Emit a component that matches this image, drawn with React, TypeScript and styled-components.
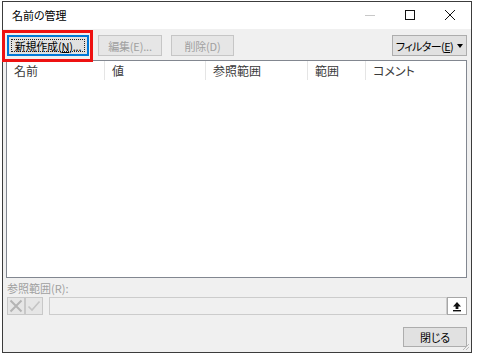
import React from "react";
import styled, { createGlobalStyle, css } from "styled-components";

const GlobalStyle = createGlobalStyle`
  html, body {
    margin: 0;
    padding: 0;
    background: #ffffff;
  }
  body {
    font-family: "Noto Sans CJK JP", "Liberation Sans", sans-serif;
    font-size: 12px;
    font-feature-settings: "palt";
    color: #000000;
  }
`;

const columns = [
  { title: "名前", width: 98 },
  { title: "値", width: 101 },
  { title: "参照範囲", width: 102 },
  { title: "範囲", width: 58 },
  { title: "コメント", width: 100 }
];

const App: React.FC = () => {
  return (
    <>
      <GlobalStyle />
      <Page>
        <Window>
          <TitleBar>
            <Title>名前の管理</Title>
            <CaptionButtons>
              <CaptionButton>
                <svg width="10" height="10" viewBox="0 0 10 10">
                  <line x1="0" y1="5.5" x2="10" y2="5.5" stroke="#c8c8c8" strokeWidth="1" />
                </svg>
              </CaptionButton>
              <CaptionButton>
                <svg width="10" height="10" viewBox="0 0 10 10">
                  <rect x="0.5" y="0.5" width="9" height="9" fill="none" stroke="#111" strokeWidth="1" />
                </svg>
              </CaptionButton>
              <CaptionButton>
                <svg width="10" height="10" viewBox="0 0 10 10">
                  <path d="M0 0 L10 10 M10 0 L0 10" stroke="#111" strokeWidth="1" />
                </svg>
              </CaptionButton>
            </CaptionButtons>
          </TitleBar>

          <Body>
            <Toolbar>
              <Button isDefault width={82}>
                <FocusRect>
                  新規作成(<u>N</u>)...
                </FocusRect>
              </Button>
              <Button disabled width={64}>
                編集(E)...
              </Button>
              <Button disabled width={63}>
                削除(D)
              </Button>
              <Spacer />
              <Button width={75}>
                <Narrow>フィルター(<u>E</u>)</Narrow>
                <Caret />
              </Button>
            </Toolbar>

            <ListView>
              <HeaderRow>
                {columns.map((col) => (
                  <HeaderCell key={col.title} style={{ width: col.width }}>
                    {col.title}
                  </HeaderCell>
                ))}
              </HeaderRow>
            </ListView>

            <RefLabel>参照範囲(R):</RefLabel>
            <RefRow>
              <IconButton>
                <svg width="14" height="14" viewBox="0 0 14 14">
                  <path d="M1.5 1.5 L12.5 12.5 M12.5 1.5 L1.5 12.5" stroke="#b4b4b4" strokeWidth="2" />
                </svg>
              </IconButton>
              <IconButton>
                <svg width="14" height="14" viewBox="0 0 14 14">
                  <path d="M1.5 7.5 L5 11 L12.5 2.5" fill="none" stroke="#c4c4c4" strokeWidth="1.6" />
                </svg>
              </IconButton>
              <RefInput />
              <CollapseButton>
                <svg width="10" height="11" viewBox="0 0 10 11">
                  <path d="M5 1 L9 5.5 L6.4 5.5 L6.4 8 L3.6 8 L3.6 5.5 L1 5.5 Z" fill="#111" />
                  <rect x="1" y="9" width="8" height="1.4" fill="#111" />
                </svg>
              </CollapseButton>
            </RefRow>

            <Footer>
              <Button width={64} tall={20}>閉じる</Button>
            </Footer>
          </Body>
          <Grip>
            <svg width="10" height="10" viewBox="0 0 10 10">
              <path d="M9 3 L3 9 M9 6 L6 9" stroke="#b8b8b8" strokeWidth="1" />
            </svg>
          </Grip>
        </Window>
        <Highlight />
      </Page>
    </>
  );
};

export default App;

const Page = styled.div`
  position: relative;
  width: 477px;
  height: 358px;
  padding: 1px 0 0 2px;
  box-sizing: border-box;
`;

const Window = styled.div`
  position: relative;
  width: 470px;
  height: 352px;
  box-sizing: border-box;
  border: 1px solid #3c3c3c;
  background: #f0f0f0;
  display: flex;
  flex-direction: column;
`;

const TitleBar = styled.div`
  height: 27px;
  flex-shrink: 0;
  background: #ffffff;
  display: flex;
  align-items: center;
  padding-left: 9px;
`;

const Title = styled.div`
  flex: 1;
  font-size: 11px;
  color: #000000;
  padding-bottom: 2px;
`;

const CaptionButtons = styled.div`
  display: flex;
  height: 100%;
  margin-right: 1px;
`;

const CaptionButton = styled.div`
  width: 40px;
  height: 100%;
  display: flex;
  align-items: center;
  justify-content: center;
  padding-bottom: 2px;
  box-sizing: border-box;
`;

const Body = styled.div`
  flex: 1;
  display: flex;
  flex-direction: column;
  padding: 6px 4px 0 3px;
`;

const Toolbar = styled.div`
  display: flex;
  align-items: center;
  gap: 9px;
  padding-left: 1px;
  height: 21px;
`;

const Spacer = styled.div`
  flex: 1;
`;

const Button = styled.button<{ isDefault?: boolean; width: number; tall?: number }>`
  width: ${({ width }) => width}px;
  height: ${({ tall }) => tall ?? 21}px;
  padding: 0;
  box-sizing: border-box;
  display: flex;
  align-items: center;
  justify-content: center;
  font-family: "Noto Sans CJK JP", "Liberation Sans", sans-serif;
  font-feature-settings: "palt";
  font-size: 11px;
  line-height: 14px;
  letter-spacing: -0.2px;
  color: #000000;
  background: #e1e1e1;
  border: 1px solid #adadad;
  white-space: nowrap;
  overflow: hidden;

  u {
    text-decoration: underline;
    text-underline-offset: 1px;
  }

  ${({ isDefault }) =>
    isDefault &&
    css`
      border: 1px solid #0078d7;
      box-shadow: inset 0 0 0 1px #0078d7;
    `}

  &:disabled {
    color: #a0a0a0;
    background: #e6e6e6;
    border-color: #c6c6c6;
  }
`;

const Narrow = styled.span`
  letter-spacing: -0.6px;
`;

const FocusRect = styled.span`
  display: flex;
  align-items: center;
  justify-content: center;
  width: calc(100% - 6px);
  height: calc(100% - 6px);
  border: 1px dotted #222;
  box-sizing: border-box;
`;

const Caret = styled.span`
  display: inline-block;
  width: 0;
  height: 0;
  margin-left: 4px;
  border-left: 3.5px solid transparent;
  border-right: 3.5px solid transparent;
  border-top: 4px solid #000;
`;

const ListView = styled.div`
  margin-top: 4px;
  height: 218px;
  width: 461px;
  flex-shrink: 0;
  box-sizing: border-box;
  background: #ffffff;
  border: 1px solid #828790;
`;

const HeaderRow = styled.div`
  display: flex;
  height: 19px;
`;

const HeaderCell = styled.div`
  box-sizing: border-box;
  padding-left: 7px;
  height: 100%;
  display: flex;
  align-items: center;
  color: #3a3a3a;
  font-size: 12px;
  border-right: 1px solid #e5e5e5;

  &:last-child {
    border-right: none;
  }
`;

const RefLabel = styled.div`
  margin-top: 3px;
  padding-left: 1px;
  height: 15px;
  line-height: 15px;
  font-size: 11px;
  color: #a0a0a0;
`;

const RefRow = styled.div`
  display: flex;
  align-items: center;
  margin-top: 1px;
  height: 18px;
  padding-left: 1px;
`;

const IconButton = styled.div`
  width: 18px;
  height: 18px;
  box-sizing: border-box;
  border: 1px solid #c8c8c8;
  background: #e6e6e6;
  display: flex;
  align-items: center;
  justify-content: center;
`;

const RefInput = styled.div`
  flex: 1;
  height: 18px;
  margin-left: 6px;
  box-sizing: border-box;
  background: #f0f0f0;
  border: 1px solid #cccccc;
`;

const CollapseButton = styled.div`
  width: 20px;
  height: 18px;
  box-sizing: border-box;
  background: #ffffff;
  border: 1px solid #a6a6a6;
  display: flex;
  align-items: center;
  justify-content: center;
`;

const Footer = styled.div`
  display: flex;
  justify-content: flex-end;
  margin-top: 12px;
`;

const Grip = styled.div`
  position: absolute;
  right: 1px;
  bottom: 1px;
  width: 10px;
  height: 10px;
  display: flex;
`;

const Highlight = styled.div`
  position: absolute;
  left: 2px;
  top: 30px;
  width: 91px;
  height: 32px;
  box-sizing: border-box;
  border: 3px solid #ee1111;
  pointer-events: none;
`;
